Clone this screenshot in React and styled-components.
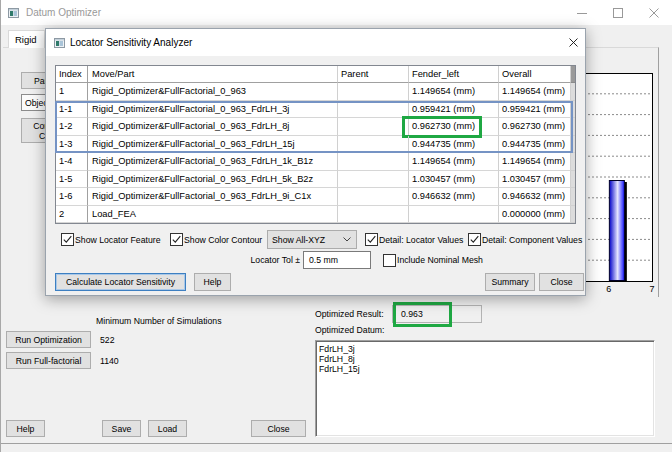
import styled, { createGlobalStyle } from "styled-components";

const GlobalStyle = createGlobalStyle`
  html, body { margin: 0; padding: 0; }
  body {
    background: #f0f0f0;
    font-family: "Liberation Sans", Arial, sans-serif;
    font-size: 8.7px;
    color: #000;
    overflow: hidden;
  }
  * { box-sizing: border-box; }
`

const Window = styled.div`
  position: relative;
  width: 672px;
  height: 452px;
  display: flex;
  flex-direction: column;
  background: #f0f0f0;
  border-left: 1px solid #a8a8a8;
  overflow: hidden;
`

const TitleBar = styled.div`
  height: ${p => p.$h}px;
  flex: none;
  display: flex;
  align-items: center;
  background: #fff;
  padding-left: ${p => p.$pad}px;
  color: ${p => (p.$inactive ? '#999' : '#000')};
  font-size: 10px;
`

const TitleText = styled.span`
  margin-left: ${p => p.$gap}px;
`

const WinControls = styled.div`
  margin-left: auto;
  display: flex;
  height: 100%;
`

const CtrlBtn = styled.div`
  width: 36px;
  height: 100%;
  display: flex;
  align-items: center;
  justify-content: center;
`

const CloseX = styled.div`
  margin-left: auto;
  margin-right: 7px;
  display: flex;
`

const TabRow = styled.div`
  height: 22px;
  flex: none;
  display: flex;
  align-items: flex-end;
  padding-left: 7px;
`

const Tab = styled.div`
  position: relative;
  z-index: 1;
  height: ${p => (p.$active ? 18 : 16)}px;
  margin-bottom: ${p => (p.$active ? -1 : 0)}px;
  padding: 0 7px 0 6px;
  display: flex;
  align-items: center;
  background: ${p => (p.$active ? '#fff' : '#f0f0f0')};
  border: 1px solid #d9d9d9;
  border-left-color: ${p => (p.$active ? '#d9d9d9' : '#555')};
  border-bottom: none;
  font-size: 9.5px;
`

const TabPanel = styled.div`
  margin-left: 2px;
  width: 656px;
  height: 250px;
  flex: none;
  display: flex;
  align-items: flex-start;
  border-top: 1px solid #d9d9d9;
  border-right: 1px solid #a0a0a0;
`

const SideButtons = styled.div`
  display: flex;
  flex-direction: column;
  padding: 24px 0 0 18px;
`

const SideButton = styled.div`
  width: 80px;
  height: ${p => p.$h || 17}px;
  margin-bottom: ${p => p.$mb || 0}px;
  display: flex;
  align-items: center;
  justify-content: center;
  text-align: center;
  line-height: 10px;
  background: ${p => (p.$light ? '#fbfbfb' : '#e1e1e1')};
  border: 1px solid ${p => (p.$light ? '#8c8c8c' : '#adadad')};
`

const Chart = styled.svg`
  margin-left: auto;
  margin-top: 18px;
  flex: none;
`

const BottomArea = styled.div`
  height: 147px;
  flex: none;
  display: flex;
  border-bottom: 1px solid #a0a0a0;
`

const LeftCol = styled.div`
  width: 309px;
  display: flex;
  flex-direction: column;
  padding: 19px 0 6px 5px;
`

const SimLabel = styled.div`
  padding-left: 90px;
  height: 11px;
  line-height: 11px;
`

const RunRow = styled.div`
  margin-top: 4px;
  display: flex;
  align-items: center;
`

const Value = styled.span`
  margin-left: 9px;
`

const Spacer = styled.div`
  flex: 1;
`

const FooterRow = styled.div`
  display: flex;
  align-items: center;
`

const Button = styled.div`
  width: ${p => p.$w}px;
  height: ${p => p.$h || 18}px;
  margin-left: ${p => p.$ml || 0}px;
  flex: none;
  display: flex;
  align-items: center;
  justify-content: center;
  background: #e1e1e1;
  border: 1px solid ${p => (p.$default ? '#3d7fc1' : '#adadad')};
  box-shadow: ${p => (p.$default ? 'inset 0 0 0 1px #a9c8e8' : 'none')};
  white-space: nowrap;
`

const RightCol = styled.div`
  flex: 1;
  display: flex;
  flex-direction: column;
  padding: 8px 0 6px 5px;
`

const ResultRow = styled.div`
  display: flex;
  align-items: center;
  height: 18px;
`

const FieldLabel = styled.div`
  width: ${p => p.$w}px;
  flex: none;
  text-align: ${p => p.$align || 'left'};
  padding-right: ${p => (p.$align === 'right' ? 3 : 0)}px;
`

const ReadOnlyBox = styled.div`
  position: relative;
  width: 90px;
  height: 18px;
  display: flex;
  align-items: center;
  padding-left: 8px;
  border: 1px solid #b4b4b4;
  background: #f0f0f0;
`

const GreenMark = styled.div`
  position: absolute;
  left: ${p => p.$l}px;
  top: ${p => p.$t}px;
  width: ${p => p.$w}px;
  height: ${p => p.$h}px;
  border: 3px solid #1fa843;
  pointer-events: none;
`

const DatumLabel = styled.div`
  margin-top: 2px;
  height: 11px;
  line-height: 11px;
`

const DatumList = styled.div`
  margin-top: 4px;
  width: 340px;
  height: 97px;
  padding: 3px 3px;
  background: #fff;
  border: 1px solid;
  border-color: #a0a0a0 #fff #fff #a0a0a0;
  box-shadow: inset 1px 1px 0 #696969, inset -1px -1px 0 #e3e3e3;
  line-height: 10px;
`

/* ---------- dialog ---------- */

const Dialog = styled.div`
  position: absolute;
  left: 44px;
  top: 28px;
  width: 541px;
  height: 268px;
  display: flex;
  flex-direction: column;
  background: #f0f0f0;
  border: 1px solid #9aa3ad;
  box-shadow: 0 3px 14px rgba(0, 0, 0, 0.35);
  z-index: 5;
`

const DialogBody = styled.div`
  flex: 1;
  display: flex;
  flex-direction: column;
  padding: 9px 1px 0 9px;
`

const TableWrap = styled.div`
  position: relative;
  width: 521px;
  border: 1px solid #828790;
  font-size: 9.3px;
`

const Grid = styled.div`
  display: grid;
  grid-template-columns: 32px 250px 71px 90px 72px 4px;
  grid-template-rows: 17px;
  grid-auto-rows: 17.5px;
  background: #fff;
`

const Cell = styled.div`
  position: relative;
  display: flex;
  align-items: center;
  padding-left: ${p => p.$pl || 3}px;
  white-space: nowrap;
  border-right: 1px solid ${p => (p.$first ? '#a0a0a0' : '#d0d0d0')};
  border-bottom: 1px solid ${p => (p.$head ? '#a0a0a0' : '#d6d6d6')};
`

const Filler = styled.div`
  background: ${p => (p.$head ? '#9a9a9a' : '#dcdcdc')};
  border-bottom: 1px solid ${p => (p.$head ? '#8a8a8a' : '#d0d0d0')};
`

const Selection = styled.div`
  position: absolute;
  left: -1px;
  top: 34.5px;
  width: 518px;
  height: 52.5px;
  border: 2px solid #7593c4;
  pointer-events: none;
`

const ControlRow = styled.div`
  margin-top: ${p => p.$mt}px;
  height: ${p => p.$h}px;
  display: flex;
  align-items: center;
  padding-left: ${p => p.$pl || 0}px;
`

const CheckItem = styled.div`
  display: flex;
  align-items: center;
  gap: 1px;
  flex: none;
  width: ${p => (p.$w ? `${p.$w}px` : 'auto')};
  margin-left: ${p => p.$ml || 0}px;
  white-space: nowrap;
`

const Box = styled.span`
  width: 13px;
  height: 13px;
  flex: none;
  display: inline-flex;
  align-items: center;
  justify-content: center;
  background: #fff;
  border: 1px solid #333;
`

const Select = styled.div`
  width: 90px;
  height: 19px;
  flex: none;
  margin-right: 8px;
  display: flex;
  align-items: center;
  justify-content: space-between;
  padding: 0 5px 0 4px;
  background: #e1e1e1;
  border: 1px solid #acacac;
`

const TextInput = styled.div`
  width: 68px;
  height: 18px;
  flex: none;
  display: flex;
  align-items: center;
  padding-left: 5px;
  background: #fff;
  border: 1px solid #7a7a7a;
`

const AppIcon = () => (
  <svg width="11" height="10" viewBox="0 0 11 10">
    <rect x="0.5" y="0.5" width="10" height="9" fill="#eef2f5" stroke="#8d99a3" />
    <rect x="1" y="1" width="9" height="1.5" fill="#c3d0da" />
    <rect x="2" y="3" width="3" height="5" fill="#2f7a6a" />
    <rect x="5.5" y="3" width="3.5" height="5" fill="#a9c4d8" />
  </svg>
)

const Check = ({ checked }) => (
  <Box>
    {checked && (
      <svg width="11" height="11" viewBox="0 0 11 11">
        <path d="M1.8 5.6 L4.3 8.2 L9.3 2.2" fill="none" stroke="#222" strokeWidth="1.1" />
      </svg>
    )}
  </Box>
)

const rows = [
  ['1', 'Rigid_Optimizer&FullFactorial_0_963', '1.149654 (mm)', '1.149654 (mm)'],
  ['1-1', 'Rigid_Optimizer&FullFactorial_0_963_FdrLH_3j', '0.959421 (mm)', '0.959421 (mm)'],
  ['1-2', 'Rigid_Optimizer&FullFactorial_0_963_FdrLH_8j', '0.962730 (mm)', '0.962730 (mm)'],
  ['1-3', 'Rigid_Optimizer&FullFactorial_0_963_FdrLH_15j', '0.944735 (mm)', '0.944735 (mm)'],
  ['1-4', 'Rigid_Optimizer&FullFactorial_0_963_FdrLH_1k_B1z', '1.149654 (mm)', '1.149654 (mm)'],
  ['1-5', 'Rigid_Optimizer&FullFactorial_0_963_FdrLH_5k_B2z', '1.030457 (mm)', '1.030457 (mm)'],
  ['1-6', 'Rigid_Optimizer&FullFactorial_0_963_FdrLH_9i_C1x', '0.946632 (mm)', '0.946632 (mm)'],
  ['2', 'Load_FEA', '', '0.000000 (mm)'],
]

const ChartDrawing = () => {
  const x0 = 10
  const x1 = 312
  const y0 = 7
  const y1 = 215
  const unit = (x1 - x0) / 7
  const grid = Array.from({ length: 9 }, (_, i) => y0 + ((i + 1) * (y1 - y0)) / 10)
  const barX = x0 + 6 * unit
  return (
    <Chart width="318" height="230" viewBox="0 0 318 230">
      <defs>
        <linearGradient id="barFill" x1="0" x2="1" y1="0" y2="0">
          <stop offset="0" stopColor="#0000c8" />
          <stop offset="0.55" stopColor="#e6e6ff" />
          <stop offset="1" stopColor="#1515ff" />
        </linearGradient>
      </defs>
      <rect x={x0 + 0.5} y={y0 + 0.5} width={x1 - x0} height={y1 - y0} fill="#fff" stroke="#000" />
      {grid.map(y => (
        <line key={y} x1={x0 + 2} x2={x1 - 2} y1={y} y2={y} stroke="#8a8a8a" strokeDasharray="2 2" />
      ))}
      <rect x={barX + 15} y={y1 - 99} width="3" height="99" fill="#000" />
      <rect x={barX + 0.5} y={y1 - 100.5} width="15" height="100" fill="url(#barFill)" stroke="#000028" strokeWidth="1" />
      {[0, 1, 2, 3, 4, 5, 6, 7].map(n => (
        <text key={n} x={x0 + n * unit} y="226" fontSize="9" textAnchor="middle" fontFamily="Liberation Sans, Arial, sans-serif">
          {n}
        </text>
      ))}
    </Chart>
  )
}

export default function App() {
  return (
    <>
      <GlobalStyle />
      <Window>
        <TitleBar $h={25} $pad={7} $inactive>
          <AppIcon />
          <TitleText $gap={7}>Datum Optimizer</TitleText>
          <WinControls>
            <CtrlBtn>
              <svg width="10" height="10" viewBox="0 0 10 10">
                <line x1="0" x2="10" y1="5.5" y2="5.5" stroke="#999" />
              </svg>
            </CtrlBtn>
            <CtrlBtn>
              <svg width="10" height="10" viewBox="0 0 10 10">
                <rect x="0.5" y="0.5" width="9" height="9" fill="none" stroke="#999" />
              </svg>
            </CtrlBtn>
            <CtrlBtn>
              <svg width="10" height="10" viewBox="0 0 10 10">
                <path d="M0.5 0.5 L9.5 9.5 M9.5 0.5 L0.5 9.5" stroke="#999" />
              </svg>
            </CtrlBtn>
          </WinControls>
        </TitleBar>

        <TabRow>
          <Tab $active>Rigid</Tab>
          <Tab>Flexible</Tab>
        </TabRow>

        <TabPanel>
          <SideButtons>
            <SideButton $mb={5}>Part Selection</SideButton>
            <SideButton $mb={7} $light>Objective Function</SideButton>
            <SideButton $h={25}>Compute Hole<br />Candidates</SideButton>
          </SideButtons>
          <ChartDrawing />
        </TabPanel>

        <BottomArea>
          <LeftCol>
            <SimLabel>Minimum Number of Simulations</SimLabel>
            <RunRow>
              <Button $w={85} $h={17}>Run Optimization</Button>
              <Value>522</Value>
            </RunRow>
            <RunRow>
              <Button $w={85} $h={17}>Run Full-factorial</Button>
              <Value>1140</Value>
            </RunRow>
            <Spacer />
            <FooterRow>
              <Button $w={39} $h={17}>Help</Button>
              <Button $w={39} $h={17} $ml={57}>Save</Button>
              <Button $w={39} $h={17} $ml={7}>Load</Button>
              <Button $w={55} $h={17} $ml={64}>Close</Button>
            </FooterRow>
          </LeftCol>
          <RightCol>
            <ResultRow>
              <FieldLabel $w={77}>Optimized Result:</FieldLabel>
              <ReadOnlyBox>
                0.963
                <GreenMark $l={0} $t={-4} $w={59} $h={25} />
              </ReadOnlyBox>
            </ResultRow>
            <DatumLabel>Optimized Datum:</DatumLabel>
            <DatumList>
              <div>FdrLH_3j</div>
              <div>FdrLH_8j</div>
              <div>FdrLH_15j</div>
            </DatumList>
          </RightCol>
        </BottomArea>

        <Dialog>
          <TitleBar $h={27} $pad={8}>
            <AppIcon />
            <TitleText $gap={5}>Locator Sensitivity Analyzer</TitleText>
            <CloseX>
              <svg width="9" height="9" viewBox="0 0 9 9">
                <path d="M0.5 0.5 L8.5 8.5 M8.5 0.5 L0.5 8.5" stroke="#111" strokeWidth="0.9" />
              </svg>
            </CloseX>
          </TitleBar>
          <DialogBody>
            <TableWrap>
              <Grid>
                <Cell $head $first>Index</Cell>
                <Cell $head $pl={4}>Move/Part</Cell>
                <Cell $head>Parent</Cell>
                <Cell $head>Fender_left</Cell>
                <Cell $head>Overall</Cell>
                <Filler $head />
                {rows.map(([idx, part, fender, overall]) => (
                  <>
                    <Cell key={`${idx}-i`} $first>{idx}</Cell>
                    <Cell key={`${idx}-p`} $pl={4}>{part}</Cell>
                    <Cell key={`${idx}-r`} />
                    <Cell key={`${idx}-f`}>
                      {fender}
                      {idx === '1-2' && <GreenMark $l={-7} $t={-2} $w={80} $h={22} />}
                    </Cell>
                    <Cell key={`${idx}-o`}>{overall}</Cell>
                    <Filler key={`${idx}-x`} />
                  </>
                ))}
              </Grid>
              <Selection />
            </TableWrap>

            <ControlRow $mt={6} $h={19} $pl={6}>
              <CheckItem $w={109}><Check checked />Show Locator Feature</CheckItem>
              <CheckItem $w={97}><Check checked />Show Color Contour</CheckItem>
              <Select>
                <span>Show All-XYZ</span>
                <svg width="8" height="5" viewBox="0 0 8 5">
                  <path d="M0.5 0.5 L4 4 L7.5 0.5" fill="none" stroke="#444" />
                </svg>
              </Select>
              <CheckItem $w={103}><Check checked />Detail: Locator Values</CheckItem>
              <CheckItem><Check checked />Detail: Component Values</CheckItem>
            </ControlRow>

            <ControlRow $mt={2} $h={18}>
              <FieldLabel $w={248} $align="right">Locator Tol ±</FieldLabel>
              <TextInput>0.5 mm</TextInput>
              <CheckItem $ml={12}><Check />Include Nominal Mesh</CheckItem>
            </ControlRow>

            <ControlRow $mt={4} $h={18}>
              <Button $w={131} $default>Calculate Locator Sensitivity</Button>
              <Button $w={37} $ml={8}>Help</Button>
              <Spacer />
              <Button $w={50}>Summary</Button>
              <Button $w={45} $ml={4}>Close</Button>
            </ControlRow>
          </DialogBody>
        </Dialog>
      </Window>
    </>
  )
}
